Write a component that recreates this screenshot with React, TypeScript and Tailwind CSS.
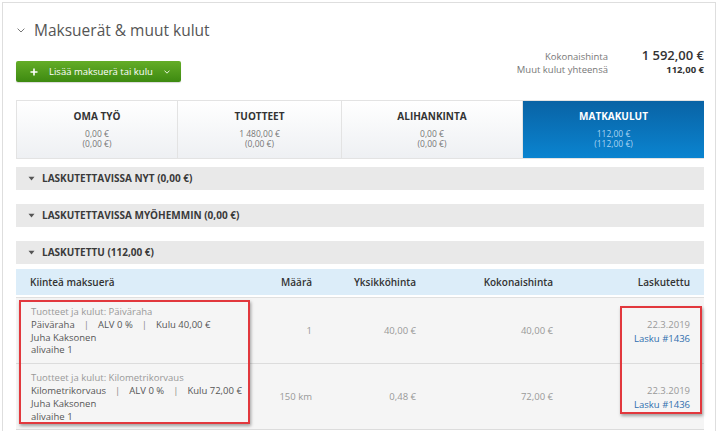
const tabs = [
  { label: 'OMA TYÖ', value: '0,00 €', billed: '(0,00 €)', active: false },
  { label: 'TUOTTEET', value: '1 480,00 €', billed: '(0,00 €)', active: false },
  { label: 'ALIHANKINTA', value: '0,00 €', billed: '(0,00 €)', active: false },
  { label: 'MATKAKULUT', value: '112,00 €', billed: '(112,00 €)', active: true },
];

const sections = ['LASKUTETTAVISSA NYT (0,00 €)', 'LASKUTETTAVISSA MYÖHEMMIN (0,00 €)', 'LASKUTETTU (112,00 €)'];

const rows = [
  {
    title: 'Tuotteet ja kulut: Päiväraha',
    name: 'Päiväraha',
    cost: 'Kulu 40,00 €',
    qty: '1',
    unit: '40,00 €',
    total: '40,00 €',
  },
  {
    title: 'Tuotteet ja kulut: Kilometrikorvaus',
    name: 'Kilometrikorvaus',
    cost: 'Kulu 72,00 €',
    qty: '150 km',
    unit: '0,48 €',
    total: '72,00 €',
  },
];

const Caret = () => (
  <svg width="7" height="5" viewBox="0 0 7 5" className="shrink-0">
    <path d="M0.5 0.8 L6.5 0.8 L3.5 4.5 Z" fill="#555" />
  </svg>
);

const App: React.FC = () => {
  return (
    <div className="relative w-[720px] h-[431px] overflow-hidden bg-white font-['Open_Sans',sans-serif]">
      <div className="ml-[2px] mt-[2px] w-[714px] h-[440px] border border-[#dedede] pl-[13px] pr-[11px]">
        {/* heading */}
        <div className="flex items-center h-[26px] mt-[14px]">
          <svg width="8" height="5" viewBox="0 0 8 5" className="ml-[1px] mr-[9px]">
            <path d="M0.6 0.6 L4 4 L7.4 0.6" fill="none" stroke="#777" strokeWidth="1" />
          </svg>
          <h1 className="text-[15.5px] leading-[26px] text-[#555]">Maksuerät &amp; muut kulut</h1>
        </div>

        <div className="flex justify-between items-end mt-[16px] h-[23px]">
          <button className="flex items-center h-[21px] w-[165px] rounded-[2px] bg-gradient-to-b from-[#64ad27] to-[#3d8a10] pl-[14px] text-white shadow-[0_1px_1px_rgba(0,0,0,0.15)]">
            <svg width="8" height="8" viewBox="0 0 8 8" className="mr-[11px]">
              <path d="M4 0.5 V7.5 M0.5 4 H7.5" stroke="#fff" strokeWidth="1.6" />
            </svg>
            <span className="text-[9.5px] leading-none">Lisää maksuerä tai kulu</span>
            <svg width="6" height="4" viewBox="0 0 6 4" className="ml-[11px]">
              <path d="M0.5 0.6 L3 3.2 L5.5 0.6" fill="none" stroke="#e6f2dc" strokeWidth="1" />
            </svg>
          </button>
          <div className="grid grid-cols-[auto_96px] items-baseline mb-[6px] text-right">
            <span className="text-[9.5px] leading-[13px] text-[#777]">Kokonaishinta</span>
            <span className="text-[13px] leading-[13px] font-semibold text-[#333]">1 592,00 €</span>
            <span className="text-[9.5px] leading-[13px] text-[#777]">Muut kulut yhteensä</span>
            <span className="text-[9.5px] leading-[13px] font-bold text-[#333]">112,00 €</span>
          </div>
        </div>

        {/* tabs */}
        <div className="grid grid-cols-[161px_164px_181px_181px] h-[59px] mt-[18px] border border-[#e3e3e3]">
          {tabs.map((t, i) => (
            <div
              key={t.label}
              className={
                t.active
                  ? 'flex flex-col items-center bg-gradient-to-b from-[#0963a5] to-[#0a84d0] pt-[9px]'
                  : `flex flex-col items-center bg-gradient-to-b from-white to-[#eef0f3] pt-[9px] ${i < 3 ? 'border-r border-[#e3e3e3]' : ''}`
              }
            >
              <span className={`text-[10px] leading-[13px] font-bold ${t.active ? 'text-white' : 'text-[#333]'}`}>{t.label}</span>
              <span className={`mt-[6px] text-[8.5px] leading-[10px] ${t.active ? 'text-[#a8d4f2]' : 'text-[#777]'}`}>{t.value}</span>
              <span className={`text-[8.5px] leading-[10px] ${t.active ? 'text-[#a8d4f2]' : 'text-[#777]'}`}>{t.billed}</span>
            </div>
          ))}
        </div>

        {/* sections */}
        <div className="flex flex-col gap-[14px] mt-[8px]">
          {sections.map((s) => (
            <div key={s} className="flex items-center h-[23px] bg-[#e9e9e9] pl-[12px] gap-[7px]">
              <Caret />
              <span className="text-[10px] font-bold text-[#3a3a3a]">{s}</span>
            </div>
          ))}
        </div>

        {/* table */}
        <div className="mt-[5px] border-b border-[#dcdcdc]">
          <div className="grid grid-cols-[1fr_60px_104px_137px_137px] items-center h-[26px] bg-[#dcedf9] px-[14px] text-[10px] font-semibold text-[#333]">
            <span>Kiinteä maksuerä</span>
            <span className="text-right">Määrä</span>
            <span className="text-right">Yksikköhinta</span>
            <span className="text-right">Kokonaishinta</span>
            <span className="text-right">Laskutettu</span>
          </div>
          <div className="h-[3px] bg-white border-b border-[#e0e0e0]" />
          {rows.map((r, i) => (
            <div
              key={r.title}
              className={`grid grid-cols-[1fr_60px_104px_137px_137px] items-center bg-[#f5f5f5] px-[14px] pt-[8px] pb-[6px] text-[9.5px] leading-[12.8px] ${i === 0 ? 'border-b border-[#dcdcdc]' : ''}`}
            >
              <div className="pl-[1px] whitespace-nowrap">
                <div className="text-[#999]">{r.title}</div>
                <div className="text-[#555] flex">
                  <span>{r.name}</span>
                  <span className="mx-[9px] text-[#888]">|</span>
                  <span>ALV 0 %</span>
                  <span className="mx-[9px] text-[#888]">|</span>
                  <span>{r.cost}</span>
                </div>
                <div className="text-[#555]">Juha Kaksonen</div>
                <div className="text-[#555]">alivaihe 1</div>
              </div>
              <span className="text-right text-[#999]">{r.qty}</span>
              <span className="text-right text-[#999]">{r.unit}</span>
              <span className="text-right text-[#999]">{r.total}</span>
              <div className="flex flex-col items-end">
                <span className="text-[#999] leading-[14px]">22.3.2019</span>
                <span className="text-[#2f6eae] leading-[14px]">Lasku #1436</span>
              </div>
            </div>
          ))}
        </div>
      </div>

      {/* annotation boxes */}
      <div className="absolute left-[19px] top-[300px] w-[231px] h-[124px] border-2 border-[#e2383d] shadow-[1px_2px_3px_rgba(0,0,0,0.35)]" />
      <div className="absolute left-[620px] top-[306px] w-[82px] h-[108px] border-2 border-[#e2383d] shadow-[1px_2px_3px_rgba(0,0,0,0.35)]" />
    </div>
  );
};

export default App;
